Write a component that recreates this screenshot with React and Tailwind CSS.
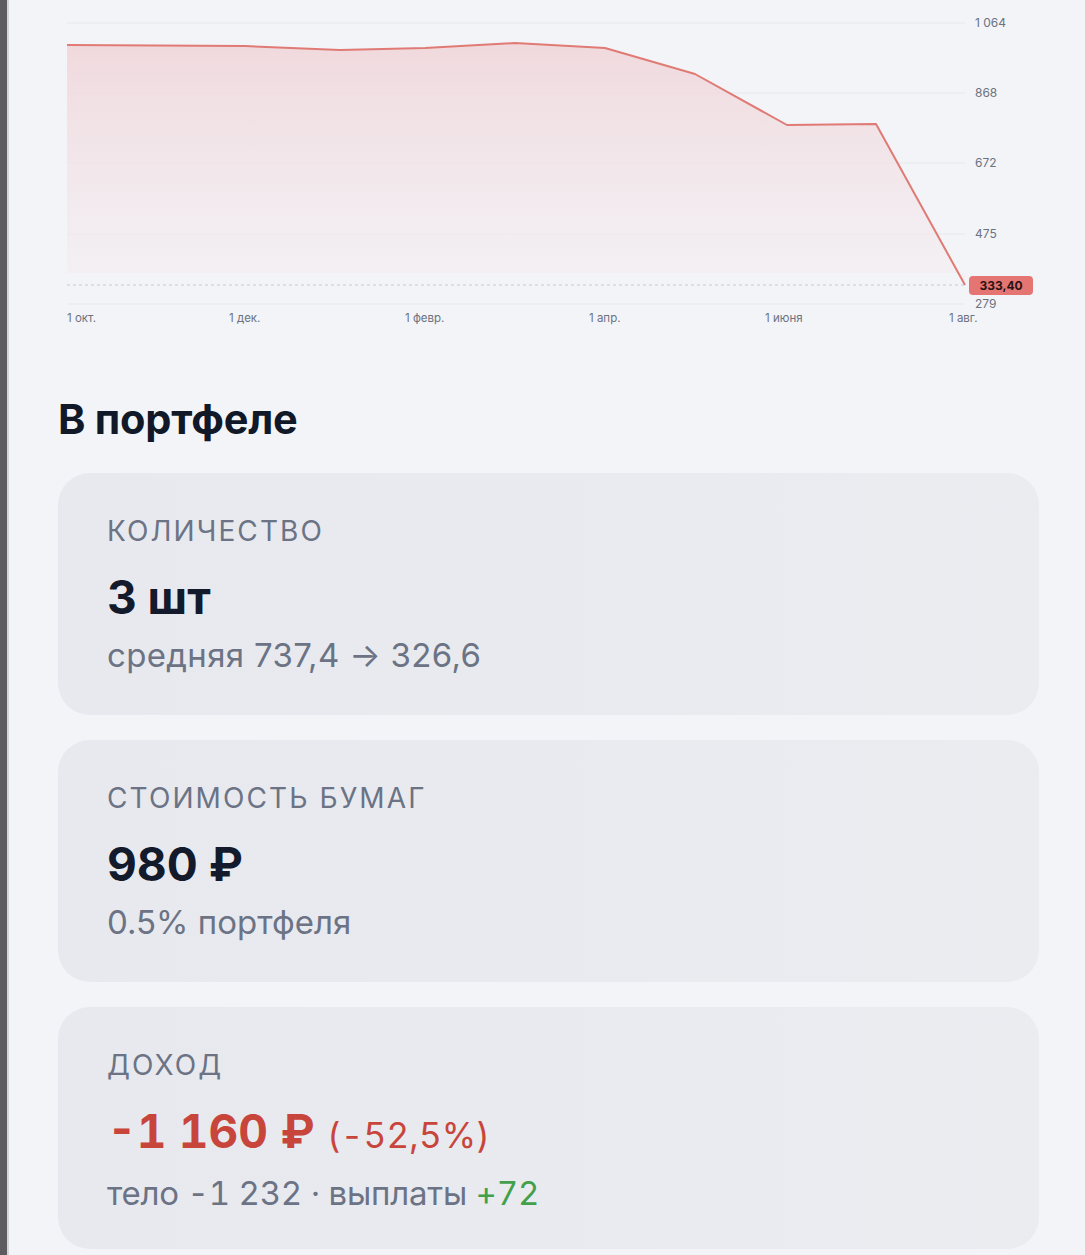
import React from "react";

const points = [
  [67, 45], [245, 46], [340, 50], [425, 48], [515, 43], [605, 48],
  [695, 74], [787, 125], [876, 124], [965, 285],
];

const yTicks = [
  { y: 23, label: "1 064" },
  { y: 93, label: "868" },
  { y: 163, label: "672" },
  { y: 234, label: "475" },
  { y: 304, label: "279" },
];

const xTicks = [
  { x: 67, label: "1 окт." },
  { x: 229, label: "1 дек." },
  { x: 405, label: "1 февр." },
  { x: 589, label: "1 апр." },
  { x: 765, label: "1 июня" },
  { x: 949, label: "1 авг." },
];

const PriceChart = () => {
  const line = points.map((p) => p.join(",")).join(" ");
  const area = `67,273 ${line} 965,273`;
  return (
    <div className="relative h-[345px] w-full">
      <svg width="1076" height="345" viewBox="9 0 1076 345" className="block">
        <defs>
          <linearGradient id="fill" x1="0" y1="0" x2="0" y2="1">
            <stop offset="0%" stopColor="#f0d6da" stopOpacity="0.9" />
            <stop offset="100%" stopColor="#f3eef2" stopOpacity="0.6" />
          </linearGradient>
        </defs>
        {yTicks.map((t) => (
          <line key={t.y} x1="67" x2="965" y1={t.y} y2={t.y} stroke="#e6e7ec" strokeWidth="1" />
        ))}
        <polygon points={area} fill="url(#fill)" />
        <line x1="67" x2="965" y1="285" y2="285" stroke="#c9cad0" strokeWidth="1" strokeDasharray="3 3" />
        <polyline points={line} fill="none" stroke="#e07a74" strokeWidth="2" strokeLinejoin="round" />
        {yTicks.map((t) => (
          <text key={t.label} x="975" y={t.y + 4} fontSize="12" fill="#6b7280" fontFamily="Inter, sans-serif">
            {t.label}
          </text>
        ))}
        {xTicks.map((t) => (
          <text key={t.label} x={t.x} y="322" fontSize="11.5" fill="#6b7280" fontFamily="Inter, sans-serif">
            {t.label}
          </text>
        ))}
      </svg>
      <div className="absolute left-[960px] top-[276px] h-[19px] w-[64px] rounded-[4px] bg-[#e57572] flex items-center justify-center text-[12px] font-bold text-[#2a1212]">
        333,40
      </div>
    </div>
  );
};

const Card = ({ label, children }) => (
  <div className="h-[242px] rounded-[32px] bg-gradient-to-r from-[#e8e9ee] to-[#ebecf0] pl-[49px] pt-[40px]">
    <p className="text-[28px] leading-[36px] tracking-[0.075em] text-[#6b7385] uppercase">{label}</p>
    {children}
  </div>
);

const App = () => {
  return (
    <div className="flex min-h-[1255px] bg-[#f3f4f8]" style={{ fontFamily: "Inter, 'Noto Sans', sans-serif" }}>
      <div className="w-[7px] shrink-0 bg-[#5b5b60]" />
      <div className="w-[2px] shrink-0 bg-[#d4d5da]" />
      <main className="flex-1">
        <PriceChart />
        <div className="ml-[49px] mr-[46px]">
          <h2 className="mt-[50px] text-[41.5px] leading-[48px] font-bold text-[#111827] tracking-[-0.005em]">В портфеле</h2>
          <div className="mt-[30px] flex flex-col gap-[25px]">
            <Card label="Количество">
              <p className="mt-[20px] text-[46px] leading-[56px] font-bold text-[#131a2b]">3 шт</p>
              <p className="mt-[10px] text-[33px] leading-[40px] text-[#6b7385] tracking-[0.01em]">средняя 737,4 → 326,6</p>
            </Card>
            <Card label="Стоимость бумаг">
              <p className="mt-[20px] text-[46px] leading-[56px] font-bold text-[#131a2b]">980 ₽</p>
              <p className="mt-[10px] text-[33px] leading-[40px] text-[#6b7385]">0.5% портфеля</p>
            </Card>
            <Card label="Доход">
              <p className="mt-[20px] text-[46px] leading-[56px] font-bold text-[#c8453b] tabular-nums">
                -1 160 ₽{" "}
                <span className="text-[35px] font-normal tracking-[0.005em]">(-52,5%)</span>
              </p>
              <p className="mt-[10px] text-[33px] leading-[40px] text-[#6b7385] tabular-nums tracking-[-0.007em]">
                тело -1 232 · выплаты <span className="text-[#43a04a]">+72</span>
              </p>
            </Card>
          </div>
        </div>
      </main>
    </div>
  );
};

export default App;
